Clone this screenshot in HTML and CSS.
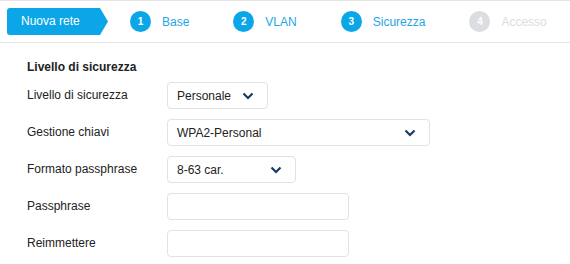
FILE: index.html
```html
<!DOCTYPE html>
<html lang="it">
<head>
<meta charset="utf-8">
<link rel="stylesheet" href="styles.css">
</head>
<body>
<div class="wizard">
  <div class="start">Nuova rete</div>
  <div class="steps">
    <div class="step"><span class="num">1</span><span class="name">Base</span></div>
    <div class="step"><span class="num">2</span><span class="name">VLAN</span></div>
    <div class="step"><span class="num">3</span><span class="name">Sicurezza</span></div>
    <div class="step off"><span class="num">4</span><span class="name">Accesso</span></div>
  </div>
</div>
<div class="form">
  <div class="title">Livello di sicurezza</div>
  <div class="grid">
    <div class="label">Livello di sicurezza</div>
    <div class="field"><div class="select w1"><span>Personale</span><svg width="12" height="8" viewBox="0 0 12 8"><path d="M1.5 1.5 L6 6 L10.5 1.5" fill="none" stroke="#1b3c5e" stroke-width="2.2"/></svg></div></div>
    <div class="label">Gestione chiavi</div>
    <div class="field"><div class="select w2"><span>WPA2-Personal</span><svg width="12" height="8" viewBox="0 0 12 8"><path d="M1.5 1.5 L6 6 L10.5 1.5" fill="none" stroke="#1b3c5e" stroke-width="2.2"/></svg></div></div>
    <div class="label">Formato passphrase</div>
    <div class="field"><div class="select w3"><span>8-63 car.</span><svg width="12" height="8" viewBox="0 0 12 8"><path d="M1.5 1.5 L6 6 L10.5 1.5" fill="none" stroke="#1b3c5e" stroke-width="2.2"/></svg></div></div>
    <div class="label">Passphrase</div>
    <div class="field"><div class="input"></div></div>
    <div class="label">Reimmettere</div>
    <div class="field"><div class="input"></div></div>
  </div>
</div>
</body>
</html>
```
FILE: styles.css
```css
html, body { margin: 0; padding: 0; background: #fff; }
body { font-family: "Liberation Sans", Arial, sans-serif; font-size: 12px; color: #222; }

.wizard {
  display: flex;
  align-items: center;
  border-top: 1px solid #e6e6e6;
  border-bottom: 1px solid #e6e6e6;
  padding: 7px 0 7px 7px;
}
.start {
  width: 101px;
  height: 27px;
  box-sizing: border-box;
  padding-left: 14px;
  line-height: 27px;
  color: #fff;
  background: #0ba6e8;
  border-radius: 3px 0 0 3px;
  clip-path: polygon(0 0, 93px 0, 101px 50%, 93px 100%, 0 100%);
  font-size: 12px;
}
.steps { display: flex; align-items: center; gap: 44px; margin-left: 22px; }
.step { display: flex; align-items: center; gap: 11px; color: #1ea6e6; }
.num {
  width: 21px; height: 21px; border-radius: 50%;
  background: #0ba6e8; color: #fff;
  font-size: 10px; font-weight: bold;
  display: flex; align-items: center; justify-content: center;
}
.name { font-size: 12px; }
.step.off { color: #dcdde1; }
.step.off .num { background: #dcdde1; }

.form { padding: 17px 0 0 27px; }
.title { font-weight: bold; font-size: 12px; line-height: 14px; margin-bottom: 8px; }
.grid {
  display: grid;
  grid-template-columns: 140px auto;
  row-gap: 10px;
  align-items: center;
}
.label { font-size: 12px; line-height: 14px; margin-top: -2px; }
.field { display: flex; }
.select, .input {
  height: 27px;
  box-sizing: border-box;
  border: 1px solid #e2e2e2;
  border-radius: 4px;
  background: #fff;
}
.select {
  display: flex; align-items: center; justify-content: space-between;
  padding: 0 13px 0 9px;
  font-size: 12px; color: #222;
}
.select svg { display: block; }
.w1 { width: 101px; }
.w2 { width: 263px; }
.w3 { width: 129px; }
.input { width: 182px; }
```
